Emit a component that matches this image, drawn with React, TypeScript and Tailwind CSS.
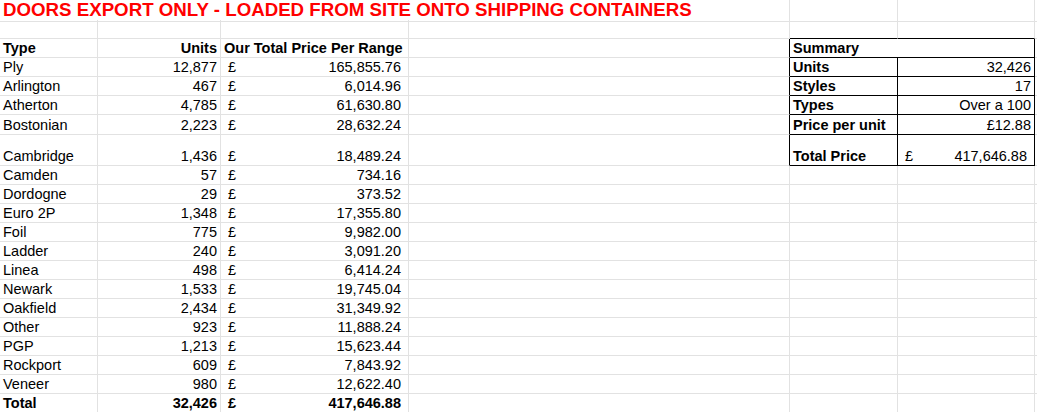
import React from 'react';
import clsx from 'clsx';

const GRID = 'grid grid-cols-[98px_123px_188px_381px_108px_137px_2px]';

type CellProps = {
  children?: React.ReactNode;
  className?: string;
  right?: boolean;
  bold?: boolean;
  rb?: boolean; // black right border
  bb?: boolean; // black bottom border
};

function Cell({ children, className, right, bold, rb, bb }: CellProps) {
  return (
    <div
      className={clsx(
        'flex items-end overflow-hidden whitespace-nowrap border-r border-b px-[3px] pb-[1px] leading-[16px]',
        rb ? 'border-r-black' : 'border-r-[#e2e2e2]',
        bb ? 'border-b-black' : 'border-b-[#e2e2e2]',
        right && 'justify-end',
        bold && 'font-bold',
        className
      )}
    >
      {children}
    </div>
  );
}

function Money({ value, bold, rb, bb }: { value: string; bold?: boolean; rb?: boolean; bb?: boolean }) {
  return (
    <Cell bold={bold} rb={rb} bb={bb} className="justify-between pl-[7px] pr-[7px]">
      <span>£</span>
      <span>{value}</span>
    </Cell>
  );
}

const items: [string, string, string][] = [
  ['Ply', '12,877', '165,855.76'],
  ['Arlington', '467', '6,014.96'],
  ['Atherton', '4,785', '61,630.80'],
  ['Bostonian', '2,223', '28,632.24'],
  ['Cambridge', '1,436', '18,489.24'],
  ['Camden', '57', '734.16'],
  ['Dordogne', '29', '373.52'],
  ['Euro 2P', '1,348', '17,355.80'],
  ['Foil', '775', '9,982.00'],
  ['Ladder', '240', '3,091.20'],
  ['Linea', '498', '6,414.24'],
  ['Newark', '1,533', '19,745.04'],
  ['Oakfield', '2,434', '31,349.92'],
  ['Other', '923', '11,888.24'],
  ['PGP', '1,213', '15,623.44'],
  ['Rockport', '609', '7,843.92'],
  ['Veneer', '980', '12,622.40'],
];

// summary sits beside the first rows of the list
const summary: { label: string; value: string; money?: boolean }[] = [
  { label: 'Units', value: '32,426' },
  { label: 'Styles', value: '17' },
  { label: 'Types', value: 'Over a 100' },
  { label: 'Price per unit', value: '£12.88' },
  { label: 'Total Price', value: '417,646.88', money: true },
];

const heights = ['h-[19px]', 'h-[19px]', 'h-[19px]', 'h-[20px]', 'h-[31px]'];

export default function App() {
  return (
    <div className="w-[1037px] h-[412px] overflow-hidden bg-white text-black text-[14.5px] font-['Liberation_Sans',Arial,sans-serif]">
      <div className={clsx(GRID, 'h-[20px]')}>
        <Cell className="col-span-4 overflow-visible text-[18.7px] leading-[20px] font-bold text-[#ff0000]">
          DOORS EXPORT ONLY - LOADED FROM SITE ONTO SHIPPING CONTAINERS
        </Cell>
        <Cell />
        <Cell />
        <Cell />
      </div>
      <div className={clsx(GRID, 'h-[19px]')}>
        <Cell />
        <Cell />
        <Cell />
        <Cell />
        <Cell bb />
        <Cell bb />
        <Cell />
      </div>
      <div className={clsx(GRID, 'h-[19px]')}>
        <Cell bold>Type</Cell>
        <Cell bold right>Units</Cell>
        <Cell bold>Our Total Price Per Range</Cell>
        <Cell rb />
        <Cell bold rb bb className="col-span-2">Summary</Cell>
        <Cell />
      </div>
      {items.map(([name, units, price], i) => {
        const s = summary[i];
        return (
          <div key={name} className={clsx(GRID, heights[i] ?? 'h-[19px]')}>
            <Cell>{name}</Cell>
            <Cell right>{units}</Cell>
            <Money value={price} />
            <Cell rb={!!s} />
            {s ? (
              <>
                <Cell bold rb bb>{s.label}</Cell>
                {s.money ? <Money value={s.value} rb bb /> : <Cell right rb bb>{s.value}</Cell>}
              </>
            ) : (
              <>
                <Cell />
                <Cell />
              </>
            )}
            <Cell />
          </div>
        );
      })}
      <div className={clsx(GRID, 'h-[19px]')}>
        <Cell bold>Total</Cell>
        <Cell bold right>32,426</Cell>
        <Money value="417,646.88" bold />
        <Cell />
        <Cell />
        <Cell />
        <Cell />
      </div>
    </div>
  );
}
